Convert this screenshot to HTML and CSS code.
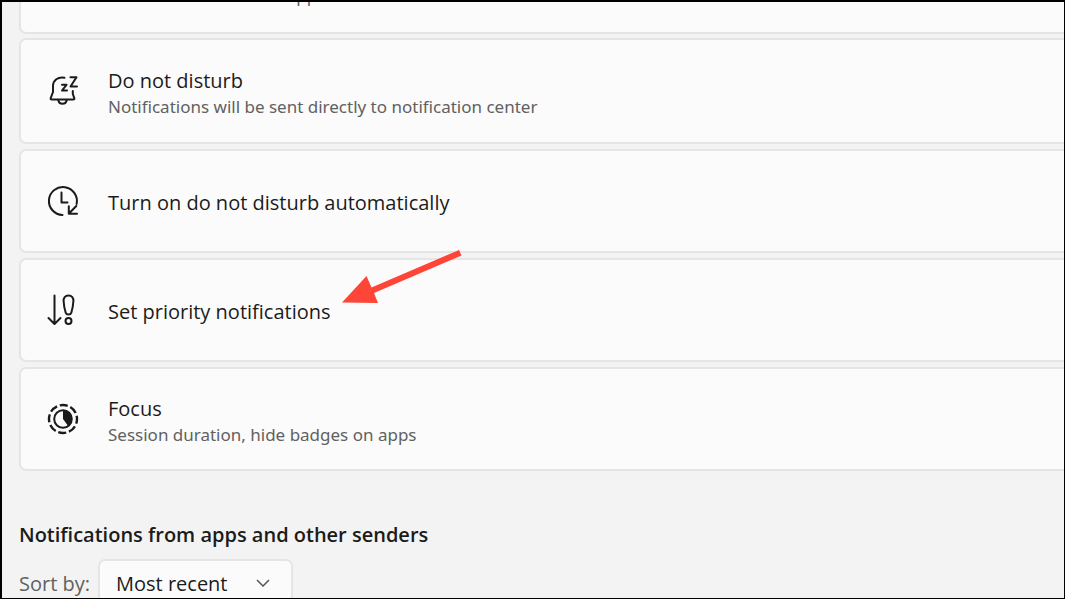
FILE: index.html
```html
<!DOCTYPE html>
<html lang="en">
  <head>
    <meta charset="UTF-8" />
    <meta name="viewport" content="width=device-width, initial-scale=1.0" />
    <title>Notifications</title>
    <link rel="stylesheet" href="styles.css">
  </head>
  <body>
    <main class="settings">
      <div class="cards">
        <a class="card card-first" href="#notifications">
          <span class="text">
            <span class="desc">Get notifications from apps and other senders</span>
          </span>
        </a>

        <a class="card card-toggle" href="#dnd">
          <svg class="icon" viewBox="0 0 32 32" aria-hidden="true">
            <path d="M17.5 2.7C11 1.3 6 5.5 6 11V17L3.7 23.2Q3.3 24.5 4.7 24.5H26.3Q27.7 24.5 27.3 23.2L25.8 19V16" />
            <path d="M11.3 25C12 30 19 30 19.7 25" />
            <path d="M15 9.8H19.5L15 15.5H20" />
            <path d="M23.5 2.2H29.5L23.5 11.5H30" />
          </svg>
          <span class="text">
            <span class="title">Do not disturb</span>
            <span class="desc">Notifications will be sent directly to notification center</span>
          </span>
        </a>

        <a class="card" href="#automatic">
          <svg class="icon" viewBox="0 0 32 32" aria-hidden="true">
            <path d="M15.5 30A14 14 0 1 1 29.6 19" />
            <path d="M14.5 7.5V17.5H20.5" />
            <path d="M21.8 21.3V28.7H30M22 28.5L29.3 21" />
          </svg>
          <span class="text">
            <span class="title">Turn on do not disturb automatically</span>
          </span>
        </a>

        <a class="card" href="#priority">
          <svg class="icon" viewBox="0 0 32 32" aria-hidden="true">
            <path d="M7.5 1.5V29.5M1.5 24L7.5 30L13.5 24" />
            <path d="M21.5 1.5C18.1 1.5 16.4 4 16.6 7C16.8 11 17.7 15.5 18.7 18.8C19.4 21.2 23.6 21.2 24.3 18.8C25.3 15.5 26.2 11 26.4 7C26.6 4 24.9 1.5 21.5 1.5Z" />
            <circle cx="21.5" cy="27" r="3" />
          </svg>
          <span class="text">
            <span class="title">Set priority notifications</span>
          </span>
        </a>

        <a class="card" href="#focus">
          <svg class="icon" viewBox="0 0 32 32" aria-hidden="true">
            <circle class="dashes" cx="16" cy="16" r="14" pathLength="80" />
            <circle cx="16" cy="16" r="8.8" />
            <path class="solid" d="M16 7.5A8.5 8.5 0 0 1 21 22.8L16 16Z" />
          </svg>
          <span class="text">
            <span class="title">Focus</span>
            <span class="desc">Session duration, hide badges on apps</span>
          </span>
        </a>

        <svg class="arrow" viewBox="0 0 120 54" aria-hidden="true">
          <path d="M0 52.5L24.5 26L29.5 37.5L117 0L119.5 5.5L32 43L36 53Z" />
        </svg>
      </div>

      <h2>Notifications from apps and other senders</h2>
      <div class="sort">
        <label for="sort">Sort by:</label>
        <div class="dropdown">
          <select id="sort">
            <option>Most recent</option>
            <option>Name</option>
          </select>
          <svg class="chevron" viewBox="0 0 14 8" aria-hidden="true">
            <path d="M1 1L7 7L13 1" />
          </svg>
        </div>
      </div>
    </main>
  </body>
</html>
```
FILE: styles.css
```css
* {
  box-sizing: border-box;
}
body {
  margin: 0;
  font-family: "Open Sans", "Noto Sans", sans-serif;
  background: #f3f3f3;
  color: #1b1b1b;
}
.settings {
  height: 100vh;
  overflow: hidden;
  border: solid #000;
  border-width: 2px 1px 1px 2px;
  padding-left: 17px;
}
.cards {
  position: relative;
  display: flex;
  flex-direction: column;
  gap: 5px;
}
.card {
  display: flex;
  align-items: center;
  gap: 29px;
  min-height: 104px;
  padding-left: 26px;
  background: #fbfbfb;
  border: 2px solid #e5e5e5;
  border-right: 0;
  border-radius: 7px 0 0 7px;
  color: inherit;
  text-decoration: none;
}
.card-first {
  min-height: 0;
  height: 32px;
  margin-bottom: -1px;
  padding-left: 87px;
  align-items: flex-end;
  padding-bottom: 25px;
  border-top: 0;
  border-top-left-radius: 0;
}
.card-toggle {
  min-height: 106px;
}
.icon {
  width: 32px;
  height: 32px;
  fill: none;
  stroke: #1b1b1b;
  stroke-width: 2;
  stroke-linecap: round;
  stroke-linejoin: round;
}
.dashes {
  stroke-width: 2.4;
  stroke-linecap: butt;
  stroke-dasharray: 7.4 2.6;
  stroke-dashoffset: 3;
}
.solid {
  fill: #1b1b1b;
  stroke: none;
}
.text {
  display: flex;
  flex-direction: column;
  padding-top: 3px;
}
.title {
  font-size: 20px;
  line-height: 28px;
}
.desc {
  font-family: "Noto Sans", sans-serif;
  font-size: 17px;
  line-height: 23px;
  color: #616161;
}
.arrow {
  position: absolute;
  left: 323px;
  top: 248px;
  width: 120px;
  height: 54px;
  fill: #ff4438;
}
h2 {
  margin: 50px 0 10px;
  font-size: 20px;
  line-height: 28px;
  font-weight: 600;
}
.sort {
  display: flex;
  align-items: center;
  gap: 8px;
  font-size: 20px;
}
.sort label {
  color: #616161;
}
.dropdown {
  position: relative;
}
select {
  appearance: none;
  width: 195px;
  height: 48px;
  padding: 0 40px 0 16px;
  border: 2px solid #e5e5e5;
  border-radius: 7px;
  background: #fbfbfb;
  color: inherit;
  font: inherit;
}
.chevron {
  position: absolute;
  right: 23px;
  top: 20px;
  width: 14px;
  height: 8px;
  fill: none;
  stroke: #555;
  stroke-width: 1.5;
  pointer-events: none;
}
```
